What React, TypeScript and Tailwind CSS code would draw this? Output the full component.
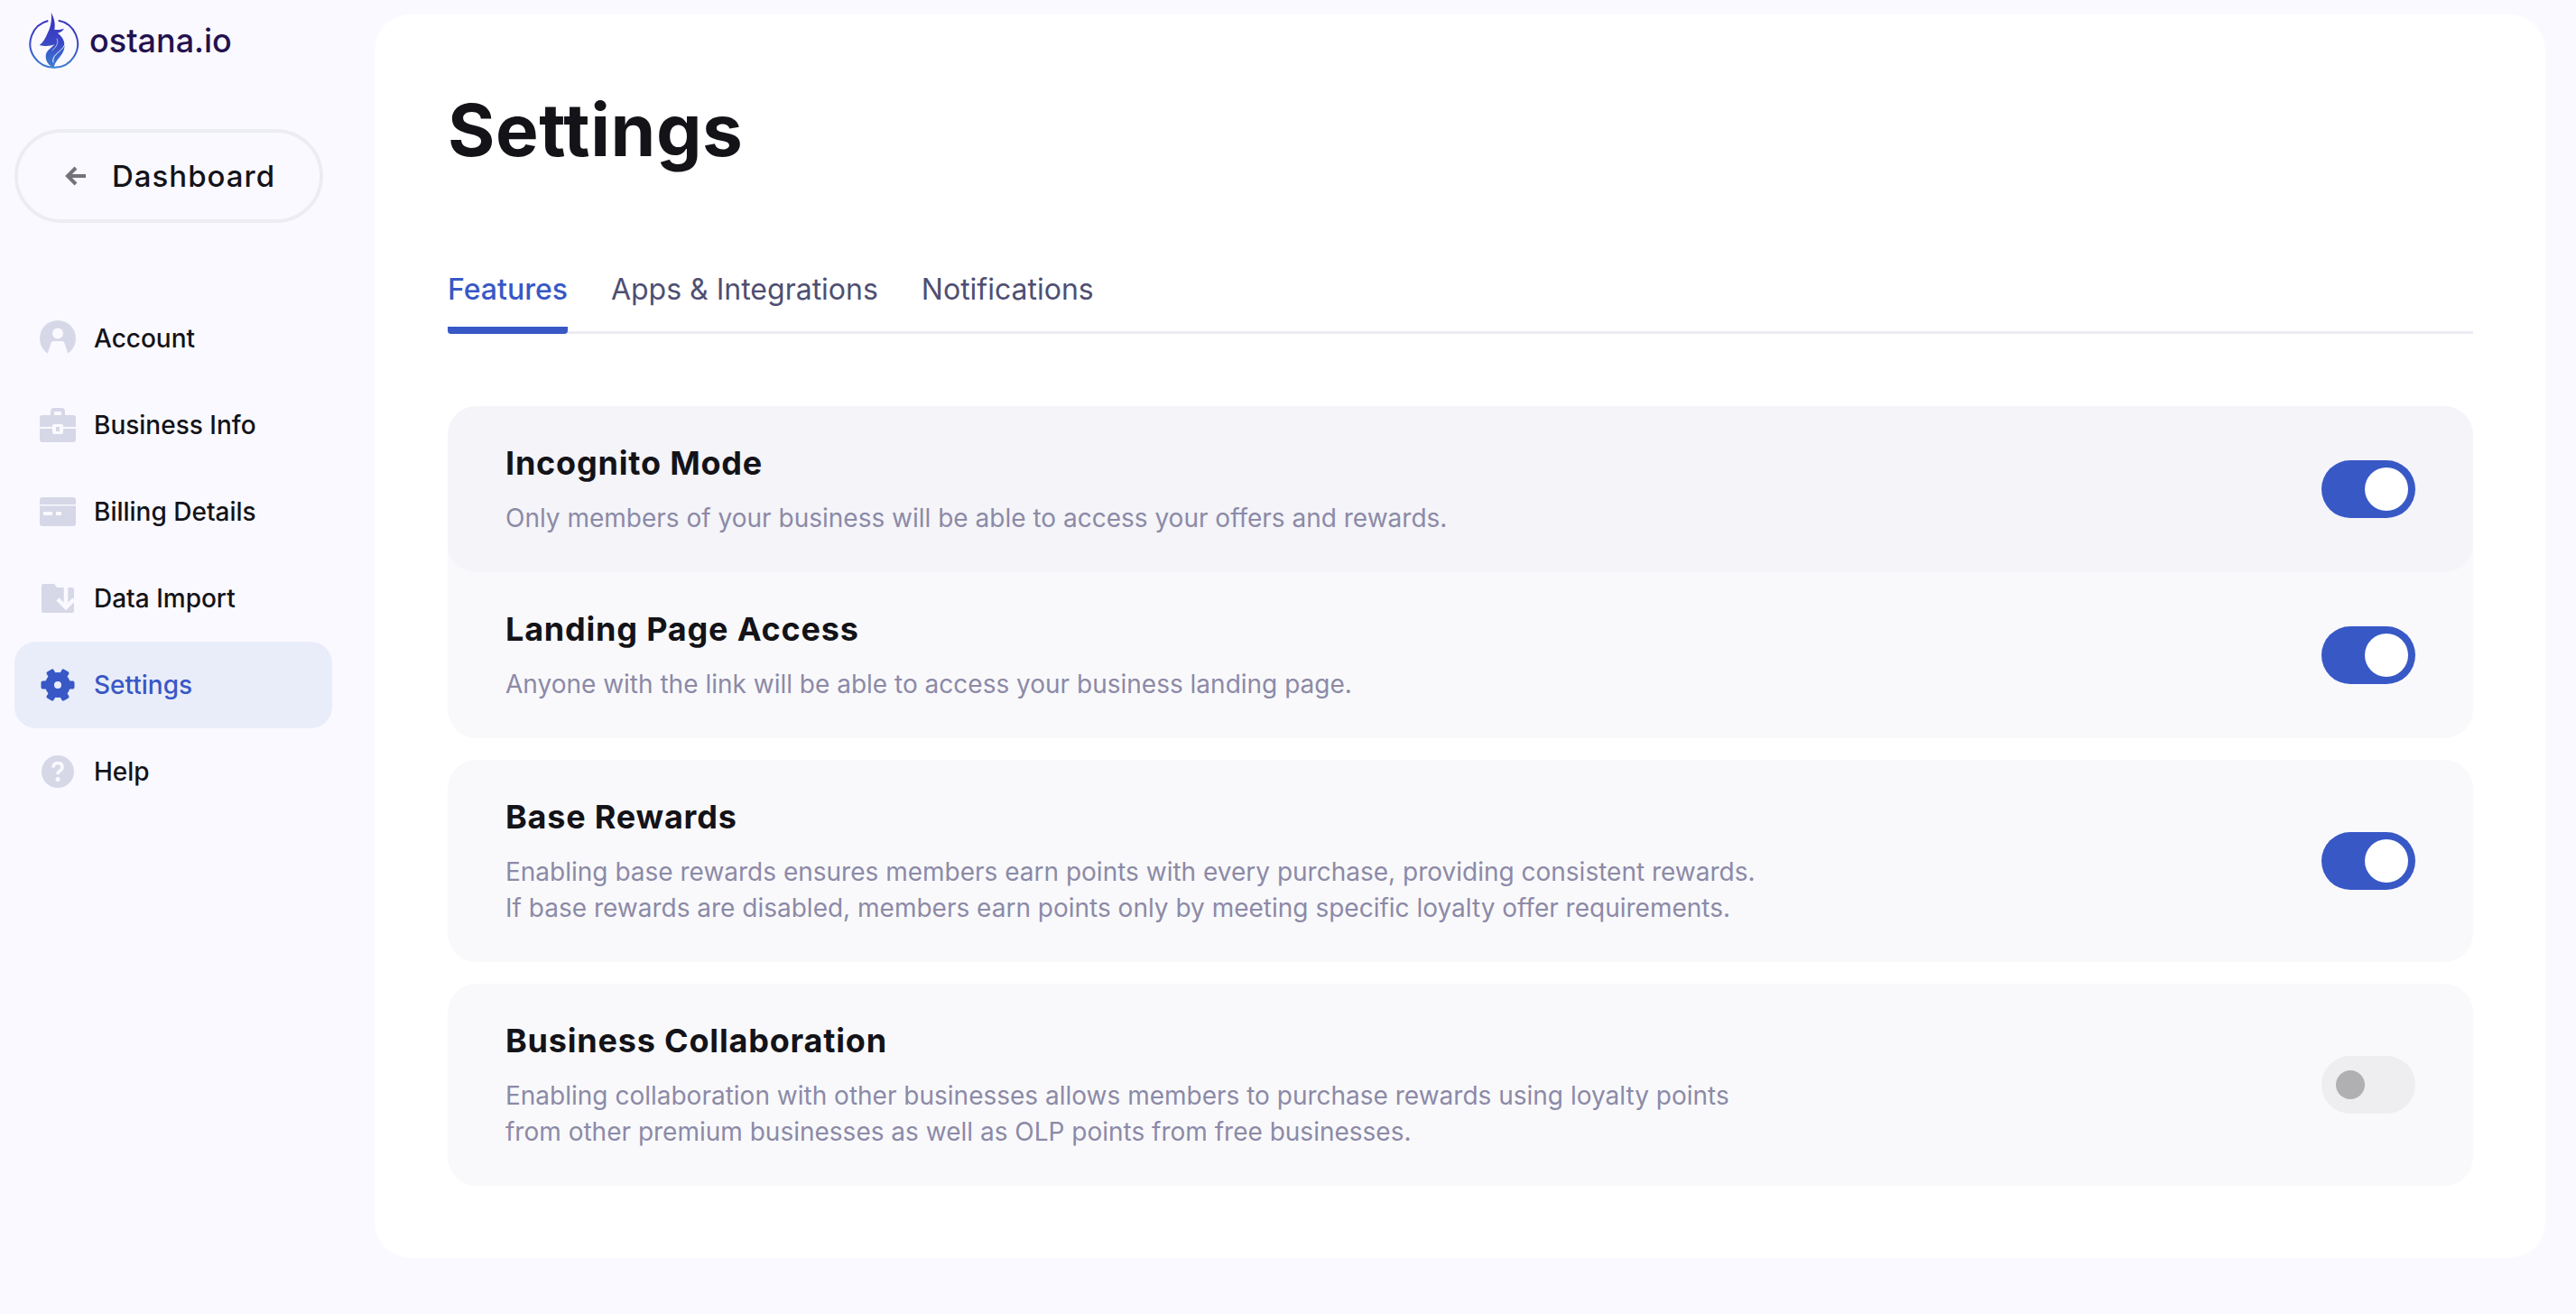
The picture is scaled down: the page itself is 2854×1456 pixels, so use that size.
const AccountIcon = () => (
  <svg viewBox="0 0 40 40" className="w-10 h-10">
    <circle cx="20" cy="20" r="20" fill="#d6d8e8" />
    <circle cx="20" cy="14.500" r="6" fill="#faf9ff" />
    <path d="M15 23h10q1.600 0 2.200 1.500L33 42H7l5.800-17.500Q13.400 23 15 23z" fill="#faf9ff" />
  </svg>
);

const BriefcaseIcon = () => (
  <svg viewBox="0 0 40 38" className="w-10 h-[38px]">
    <path d="M12 9V4q0-4 4-4h8q4 0 4 4v5h-4V5q0-1-1-1h-6q-1 0-1 1v4z" fill="#d6d8e8" />
    <path d="M3 8h34q3 0 3 3v10H0V11q0-3 3-3z" fill="#d6d8e8" />
    <path d="M0 23h40v12q0 3-3 3H3q-3 0-3-3z" fill="#d6d8e8" />
    <rect x="14" y="18" width="12" height="11" rx="2" fill="#faf9ff" />
    <rect x="18" y="21" width="4" height="5" fill="#d6d8e8" />
  </svg>
);

const CardIcon = () => (
  <svg viewBox="0 0 40 32" className="w-10 h-8">
    <path d="M3 0h34q3 0 3 3v5H0V3q0-3 3-3z" fill="#d6d8e8" />
    <path d="M0 9.500h40V29q0 3-3 3H3q-3 0-3-3z" fill="#d6d8e8" />
    <rect x="4" y="16" width="10" height="4" fill="#faf9ff" />
    <rect x="18" y="16" width="6" height="4" fill="#faf9ff" />
  </svg>
);

const FolderIcon = () => (
  <svg viewBox="0 0 36 32" className="w-9 h-8">
    <path d="M2 0h12l3 4h17q2 0 2 2v24q0 2-2 2H2q-2 0-2-2V2q0-2 2-2z" fill="#d6d8e8" />
    <path d="M27 3v22M18 17l9 9 9-9" fill="none" stroke="#faf9ff" strokeWidth="4.500" />
  </svg>
);

const GearIcon = () => (
  <svg viewBox="0 0 38 36" className="w-[38px] h-9">
    <circle cx="19" cy="18" r="14" fill="#3858c6" />
    {[30, 90, 150, 210, 270, 330].map((a) => (
      <rect key={a} x="14.500" y="-0.500" width="9" height="9" rx="2" fill="#3858c6" transform={`rotate(${a} 19 18)`} />
    ))}
    <circle cx="19" cy="18" r="4" fill="#e9edf9" />
  </svg>
);

const HelpIcon = () => (
  <svg viewBox="0 0 36 36" className="w-9 h-9">
    <circle cx="18" cy="18" r="18" fill="#d6d8e8" />
    <path d="M13 13.500q0-5 5-5t5 4.500q0 2.500-2.500 4t-2.500 4" fill="none" stroke="#faf9ff" strokeWidth="3.500" />
    <circle cx="18" cy="26.500" r="2.500" fill="#faf9ff" />
  </svg>
);

const Logo = () => (
  <svg viewBox="90 30 180 210" className="w-[60px] h-[70px] shrink-0">
    <defs>
      <linearGradient id="logoFill" gradientUnits="userSpaceOnUse" x1="170" y1="40" x2="170" y2="228">
        <stop offset="0" stopColor="#3a2fc0" />
        <stop offset="0.55" stopColor="#3a48c4" />
        <stop offset="1" stopColor="#3a80d2" />
      </linearGradient>
    </defs>
    <path d="M191 68A79 79 0 1 1 157 69" fill="none" stroke="url(#logoFill)" strokeWidth="6" />
    <path
      d="M167 42C176 58 182 78 178 98C188 100 198 98 210 95C204 104 197 108 189 110C209 124 219 150 206 174C196 192 180 204 176 224C160 220 148 204 149 186C150 170 164 162 178 148C164 153 150 155 128 150C141 141 148 126 155 110C163 96 171 70 167 42Z"
      fill="url(#logoFill)"
    />
    <path d="M214 138C214 158 196 168 182 182C174 190 172 200 174 208" fill="none" stroke="#faf9ff" strokeWidth="3" />
    <path d="M186 128C192 142 186 154 170 168" fill="none" stroke="#faf9ff" strokeWidth="2" />
  </svg>
);

const navItems = [
  { label: "Account", icon: <AccountIcon /> },
  { label: "Business Info", icon: <BriefcaseIcon /> },
  { label: "Billing Details", icon: <CardIcon /> },
  { label: "Data Import", icon: <FolderIcon /> },
  { label: "Settings", icon: <GearIcon />, active: true },
  { label: "Help", icon: <HelpIcon /> },
];

const Toggle = ({ on }: { on: boolean }) => (
  <div
    className={
      on
        ? "w-[104px] h-16 shrink-0 rounded-full bg-[#3858c6] flex items-center justify-end pr-2"
        : "w-[104px] h-16 shrink-0 rounded-full bg-[#eeeef0] flex items-center pl-4"
    }
  >
    <div className={on ? "w-12 h-12 rounded-full bg-white" : "w-8 h-8 rounded-full bg-[#b0b0b2]"} />
  </div>
);

const Row = ({
  title,
  lines,
  on,
  className,
}: {
  title: string;
  lines: string[];
  on: boolean;
  className: string;
}) => (
  <div className={`flex items-center justify-between pl-16 pr-[64px] ${className}`}>
    <div className="pb-[2px]">
      <h3 className="text-[36px] leading-[48px] font-bold tracking-[0.8px] text-[#131318]">{title}</h3>
      <div className="mt-[17px] text-[28px] leading-10 text-[#8c8aa6]">
        {lines.map((l) => (
          <p key={l}>{l}</p>
        ))}
      </div>
    </div>
    <Toggle on={on} />
  </div>
);

export default function App() {
  return (
    <div className="w-full h-screen bg-[#faf9ff] flex font-['Inter',sans-serif] overflow-hidden">
      <aside className="w-[415px] shrink-0 pl-4">
        <div className="flex items-center gap-2 pl-[15px] pt-[10px] h-20">
          <Logo />
          <span className="font-medium text-[36px] leading-none text-[#23124f]">ostana.io</span>
        </div>
        <button className="mt-[63px] w-[342px] h-[104px] rounded-full border-4 border-[#ecedf3] flex items-center pl-[52px] gap-[28px]">
          <svg viewBox="0 0 24 22" className="w-6 h-[22px]" fill="none" stroke="#737378" strokeWidth="4">
            <path d="M23 11H4M12 2l-9 9 9 9" />
          </svg>
          <span className="text-[33px] leading-none font-medium text-[#131318] tracking-[1px]">Dashboard</span>
        </button>
        <nav className="mt-[80px] w-[352px]">
          {navItems.map((n) => (
            <div
              key={n.label}
              className={
                n.active
                  ? "h-24 flex items-center rounded-3xl bg-[#e9edf9] text-[#3858c6]"
                  : "h-24 flex items-center rounded-3xl text-[#131318]"
              }
            >
              <div className="w-[88px] pl-2 flex justify-center">{n.icon}</div>
              <span className="text-[28px] font-medium leading-none">{n.label}</span>
            </div>
          ))}
        </nav>
      </aside>
      <main className="mt-4 w-[2405px] h-[1378px] rounded-[40px] bg-white pl-[81px] pr-20">
        <h1 className="pt-[86px] text-[80px] leading-[84px] font-bold tracking-[0.6px] text-[#131318]">Settings</h1>
        <div className="mt-[115px] flex gap-12 border-b-[3px] border-[#ecedf3] h-[69px]">
          <div className="h-[69px] border-b-8 rounded-b-sm border-[#3858c6] text-[#3858c6] text-[32px] leading-10 font-medium">Features</div>
          <div className="text-[#4f4f72] text-[32px] leading-10">Apps &amp; Integrations</div>
          <div className="text-[#4f4f72] text-[32px] leading-10">Notifications</div>
        </div>
        <div className="mt-[80px] flex flex-col">
          <Row
            title="Incognito Mode"
            lines={["Only members of your business will be able to access your offers and rewards."]}
            on
            className="h-[184px] rounded-[32px] bg-[#f4f4f9] relative"
          />
          <div className="-mt-8 pt-8 rounded-b-[32px] bg-[#f9f9fc]">
            <Row
              title="Landing Page Access"
              lines={["Anyone with the link will be able to access your business landing page."]}
              on
              className="h-[184px]"
            />
          </div>
          <Row
            title="Base Rewards"
            lines={[
              "Enabling base rewards ensures members earn points with every purchase, providing consistent rewards.",
              "If base rewards are disabled, members earn points only by meeting specific loyalty offer requirements.",
            ]}
            on
            className="mt-6 h-[224px] rounded-[32px] bg-[#f9f9fc]"
          />
          <Row
            title="Business Collaboration"
            lines={[
              "Enabling collaboration with other businesses allows members to purchase rewards using loyalty points",
              "from other premium businesses as well as OLP points from free businesses.",
            ]}
            on={false}
            className="mt-6 h-[224px] rounded-[32px] bg-[#f9f9fc]"
          />
        </div>
      </main>
    </div>
  );
}
